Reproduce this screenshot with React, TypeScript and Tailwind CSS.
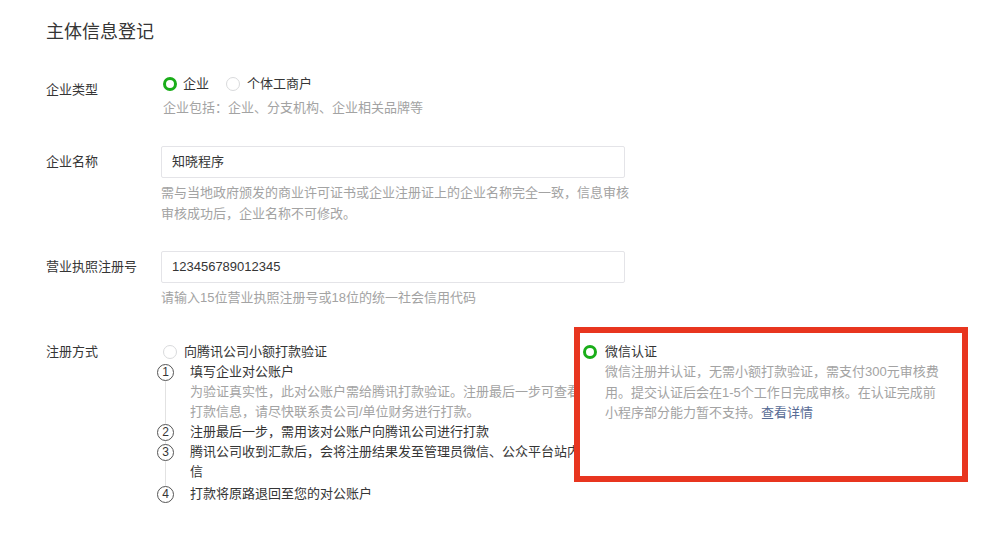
const labelCls = 'w-[115px] shrink-0 text-[13px] text-[#353535]';
const helpCls = 'text-[13px] leading-[20px] text-[#a3a3a3]';

function Radio({ checked }: { checked?: boolean }) {
  return checked ? (
    <span className="inline-block h-[14px] w-[14px] shrink-0 rounded-full border-[3px] border-[#1aad19] bg-white" />
  ) : (
    <span className="inline-block h-[14px] w-[14px] shrink-0 rounded-full border border-[#d9dadc] bg-white" />
  );
}

function StepNum({ n }: { n: number }) {
  return (
    <span className="relative z-10 flex h-[17px] w-[17px] shrink-0 items-center justify-center rounded-full border border-[#555] bg-white text-[12px] leading-none text-[#353535]">
      {n}
    </span>
  );
}

export default function App() {
  return (
    <div className="h-[535px] w-[1000px] overflow-hidden bg-white pl-[46px] pt-[20px] font-['Liberation_Sans','Noto_Sans_CJK_SC',sans-serif] text-[#353535]">
      <h2 className="text-[18px] leading-[24px] font-normal">主体信息登记</h2>

      {/* 企业类型 */}
      <div className="mt-[30px] flex">
        <div className={labelCls + ' pt-[6px] leading-[20px]'}>企业类型</div>
        <div className="pl-[2px]">
          <div className="flex items-center text-[13px] leading-[20px]">
            <Radio checked />
            <span className="ml-[6px]">企业</span>
            <span className="ml-[17px] flex items-center">
              <Radio />
              <span className="ml-[7px]">个体工商户</span>
            </span>
          </div>
          <p className={helpCls + ' mt-[4px]'}>企业包括：企业、分支机构、企业相关品牌等</p>
        </div>
      </div>

      {/* 企业名称 */}
      <div className="mt-[28px] flex">
        <div className={labelCls + ' leading-[32px]'}>企业名称</div>
        <div className="w-[464px]">
          <div className="h-[32px] rounded-[2px] border border-[#e4e4e8] px-[10px] text-[13px] leading-[30px]">
            知晓程序
          </div>
          <p className="mt-[4px] w-[472px] text-[13px] leading-[21px] text-[#a3a3a3]">
            需与当地政府颁发的商业许可证书或企业注册证上的企业名称完全一致，信息审核审核成功后，企业名称不可修改。
          </p>
        </div>
      </div>

      {/* 营业执照注册号 */}
      <div className="mt-[27px] flex">
        <div className={labelCls + ' leading-[32px]'}>营业执照注册号</div>
        <div className="w-[464px]">
          <div className="h-[32px] rounded-[2px] border border-[#e4e4e8] px-[10px] text-[13px] leading-[30px]">
            123456789012345
          </div>
          <p className={helpCls + ' mt-[5px]'}>请输入15位营业执照注册号或18位的统一社会信用代码</p>
        </div>
      </div>

      {/* 注册方式 */}
      <div className="mt-[34px] flex items-start">
        <div className={labelCls + ' leading-[20px]'}>注册方式</div>
        <div className="flex items-start">
          <div className="w-[413px] shrink-0">
            <div className="flex items-center pl-[2px] text-[13px] leading-[20px]">
              <Radio />
              <span className="ml-[7px]">向腾讯公司小额打款验证</span>
            </div>
            <div className="relative -ml-[4px] w-[430px] text-[13px] leading-[20px]">
              <span className="absolute left-[8px] top-[10px] bottom-[10px] w-px bg-[#e2e2e2]" />
              <div className="flex">
                <div className="flex h-[20px] items-center">
                  <StepNum n={1} />
                </div>
                <div className="ml-[16px] w-[397px]">
                  <div>填写企业对公账户</div>
                  <div className="text-[#a3a3a3]">
                    为验证真实性，此对公账户需给腾讯打款验证。注册最后一步可查看打款信息，请尽快联系贵公司/单位财务进行打款。
                  </div>
                </div>
              </div>
              <div className="flex">
                <div className="flex h-[20px] items-center">
                  <StepNum n={2} />
                </div>
                <div className="ml-[16px] w-[397px]">注册最后一步，需用该对公账户向腾讯公司进行打款</div>
              </div>
              <div className="flex">
                <div className="flex h-[20px] items-center">
                  <StepNum n={3} />
                </div>
                <div className="ml-[16px] w-[397px]">
                  腾讯公司收到汇款后，会将注册结果发至管理员微信、公众平台站内信
                </div>
              </div>
              <div className="mt-[2px] flex">
                <div className="flex h-[20px] items-center">
                  <StepNum n={4} />
                </div>
                <div className="ml-[16px] w-[397px]">打款将原路退回至您的对公账户</div>
              </div>
            </div>
          </div>

          <div className="relative z-20 -mt-[15px] h-[155px] w-[394px] shrink-0 border-[6px] border-[#e8351f] bg-white pl-[3px] pt-[9px]">
            <div className="flex items-center text-[13px] leading-[20px]">
              <Radio checked />
              <span className="ml-[8px]">微信认证</span>
            </div>
            <p className="ml-[22px] w-[342px] text-[13px] leading-[20.5px] text-[#a3a3a3]">
              微信注册并认证，无需小额打款验证，需支付300元审核费用。提交认证后会在1-5个工作日完成审核。在认证完成前小程序部分能力暂不支持。
              <span className="text-[#576b95]">查看详情</span>
            </p>
          </div>
        </div>
      </div>
    </div>
  );
}
